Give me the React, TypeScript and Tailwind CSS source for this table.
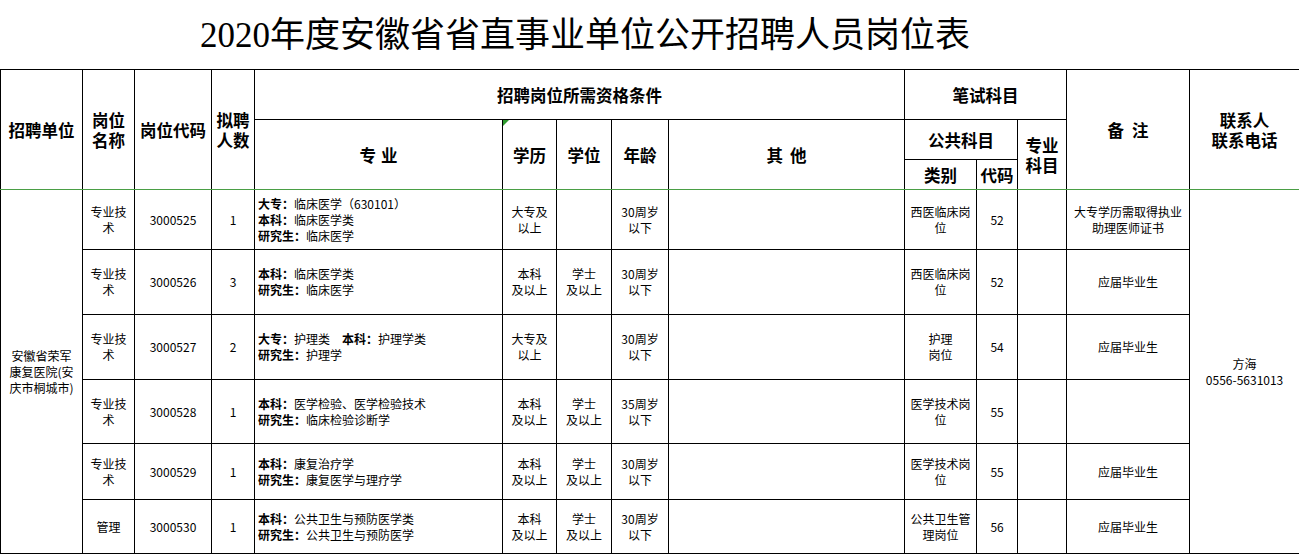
import React from 'react';

type Seg = [string, string];
type Row = {
  name: string[];
  code: string;
  n: string;
  major: Seg[][];
  edu: string[];
  deg: string[];
  age: string[];
  cat: string[];
  cc: string;
  note: string[];
  h: string;
};

const rows: Row[] = [
  {
    name: ['专业技', '术'],
    code: '3000525',
    n: '1',
    major: [[['大专：', '临床医学（630101）']], [['本科：', '临床医学类']], [['研究生：', '临床医学']]],
    edu: ['大专及', '以上'],
    deg: [],
    age: ['30周岁', '以下'],
    cat: ['西医临床岗', '位'],
    cc: '52',
    note: ['大专学历需取得执业', '助理医师证书'],
    h: 'h-[60px]',
  },
  {
    name: ['专业技', '术'],
    code: '3000526',
    n: '3',
    major: [[['本科：', '临床医学类']], [['研究生：', '临床医学']]],
    edu: ['本科', '及以上'],
    deg: ['学士', '及以上'],
    age: ['30周岁', '以下'],
    cat: ['西医临床岗', '位'],
    cc: '52',
    note: ['应届毕业生'],
    h: 'h-[65px]',
  },
  {
    name: ['专业技', '术'],
    code: '3000527',
    n: '2',
    major: [
      [
        ['大专：', '护理类　'],
        ['本科：', '护理学类'],
      ],
      [['研究生：', '护理学']],
    ],
    edu: ['大专及', '以上'],
    deg: [],
    age: ['30周岁', '以下'],
    cat: ['护理', '岗位'],
    cc: '54',
    note: ['应届毕业生'],
    h: 'h-[65px]',
  },
  {
    name: ['专业技', '术'],
    code: '3000528',
    n: '1',
    major: [[['本科：', '医学检验、医学检验技术']], [['研究生：', '临床检验诊断学']]],
    edu: ['本科', '及以上'],
    deg: ['学士', '及以上'],
    age: ['35周岁', '以下'],
    cat: ['医学技术岗', '位'],
    cc: '55',
    note: [],
    h: 'h-[64px]',
  },
  {
    name: ['专业技', '术'],
    code: '3000529',
    n: '1',
    major: [[['本科：', '康复治疗学']], [['研究生：', '康复医学与理疗学']]],
    edu: ['本科', '及以上'],
    deg: ['学士', '及以上'],
    age: ['30周岁', '以下'],
    cat: ['医学技术岗', '位'],
    cc: '55',
    note: ['应届毕业生'],
    h: 'h-[56px]',
  },
  {
    name: ['管理'],
    code: '3000530',
    n: '1',
    major: [[['本科：', '公共卫生与预防医学类']], [['研究生：', '公共卫生与预防医学']]],
    edu: ['本科', '及以上'],
    deg: ['学士', '及以上'],
    age: ['30周岁', '以下'],
    cat: ['公共卫生管', '理岗位'],
    cc: '56',
    note: ['应届毕业生'],
    h: 'h-[54px]',
  },
];

const th =
  'border border-black p-0 text-center align-middle font-bold text-[16.5px] leading-[20px]';
const GB = 'border-b-[#4a9e45]';
const td = 'border border-black p-0 text-center align-middle font-normal text-[12px] leading-[16px]';
const GT = 'border-t-[#4a9e45]';

function Lines({ lines }: { lines: string[] }) {
  return (
    <>
      {lines.map((l, i) => (
        <div key={i}>{l}</div>
      ))}
    </>
  );
}

export default function App() {
  return (
    <div className="w-[1299px] bg-white text-black font-['Noto_Sans_CJK_SC',sans-serif]">
      <div className="h-[69px] pl-[200px] pt-[18px]">
        <div className="text-[35px] leading-[36px] font-['Liberation_Serif','Noto_Sans_CJK_SC',serif] whitespace-nowrap">
          2020年度安徽省省直事业单位公开招聘人员岗位表
        </div>
      </div>
      <table className="w-[1299px] table-fixed border-collapse">
        <colgroup>
          <col className="w-[82px]" />
          <col className="w-[52px]" />
          <col className="w-[77px]" />
          <col className="w-[43px]" />
          <col className="w-[248px]" />
          <col className="w-[54px]" />
          <col className="w-[55px]" />
          <col className="w-[57px]" />
          <col className="w-[236px]" />
          <col className="w-[72px]" />
          <col className="w-[41px]" />
          <col className="w-[49px]" />
          <col className="w-[123px]" />
          <col className="w-[110px]" />
        </colgroup>
        <thead>
          <tr className="h-[50px]">
            <th rowSpan={3} className={`${th} ${GB}`}>
              招聘单位
            </th>
            <th rowSpan={3} className={`${th} ${GB}`}>
              <div>岗位</div>
              <div>名称</div>
            </th>
            <th rowSpan={3} className={`${th} ${GB}`}>
              岗位代码
            </th>
            <th rowSpan={3} className={`${th} ${GB}`}>
              <div>拟聘</div>
              <div>人数</div>
            </th>
            <th colSpan={5} className={th}>
              招聘岗位所需资格条件
            </th>
            <th colSpan={3} className={th}>
              笔试科目
            </th>
            <th rowSpan={3} className={`${th} ${GB}`}>
              备<span className="inline-block w-[8px]" />注
            </th>
            <th rowSpan={3} className={`${th} ${GB}`}>
              <div>联系人</div>
              <div>联系电话</div>
            </th>
          </tr>
          <tr className="h-[40px]">
            <th rowSpan={2} className={`${th} ${GB}`}>
              专<span className="inline-block w-[5px]" />业
            </th>
            <th rowSpan={2} className={`${th} ${GB} relative`}>
              <span className="absolute left-0 top-0 h-0 w-0 border-t-[6px] border-r-[6px] border-t-[#2e9a2e] border-r-transparent" />
              学历
            </th>
            <th rowSpan={2} className={`${th} ${GB}`}>
              学位
            </th>
            <th rowSpan={2} className={`${th} ${GB}`}>
              年龄
            </th>
            <th rowSpan={2} className={`${th} ${GB}`}>
              其<span className="inline-block w-[7px]" />他
            </th>
            <th colSpan={2} className={th}>
              公共科目
            </th>
            <th rowSpan={2} className={`${th} ${GB}`}>
              <div>专业</div>
              <div>科目</div>
            </th>
          </tr>
          <tr className="h-[30px]">
            <th className={`${th} ${GB}`}>类别</th>
            <th className={`${th} ${GB}`}>代码</th>
          </tr>
        </thead>
        <tbody>
          {rows.map((r, i) => {
            const t = i === 0 ? GT : '';
            return (
              <tr key={r.code} className={r.h}>
                {i === 0 && (
                  <td rowSpan={6} className={`${td} ${GT} px-[3px]`}>
                    <Lines lines={['安徽省荣军', '康复医院(安', '庆市桐城市)']} />
                  </td>
                )}
                <td className={`${td} ${t}`}>
                  <Lines lines={r.name} />
                </td>
                <td className={`${td} ${t}`}>{r.code}</td>
                <td className={`${td} ${t}`}>{r.n}</td>
                <td className={`${td} ${t} text-left pl-[3px]`}>
                  {r.major.map((line, j) => (
                    <div key={j} className="whitespace-nowrap">
                      {line.map(([b, n], k) => (
                        <React.Fragment key={k}>
                          <span className="font-bold">{b}</span>
                          <span>{n}</span>
                        </React.Fragment>
                      ))}
                    </div>
                  ))}
                </td>
                <td className={`${td} ${t}`}>
                  <Lines lines={r.edu} />
                </td>
                <td className={`${td} ${t}`}>
                  <Lines lines={r.deg} />
                </td>
                <td className={`${td} ${t}`}>
                  <Lines lines={r.age} />
                </td>
                <td className={`${td} ${t}`} />
                <td className={`${td} ${t}`}>
                  <Lines lines={r.cat} />
                </td>
                <td className={`${td} ${t}`}>{r.cc}</td>
                <td className={`${td} ${t}`} />
                <td className={`${td} ${t}`}>
                  <Lines lines={r.note} />
                </td>
                {i === 0 && (
                  <td rowSpan={6} className={`${td} ${GT}`}>
                    <div>方海</div>
                    <div>0556-5631013</div>
                  </td>
                )}
              </tr>
            );
          })}
          <tr className="h-[24px]">
            {Array.from({ length: 14 }).map((_, i) => (
              <td key={i} className={td} />
            ))}
          </tr>
        </tbody>
      </table>
    </div>
  );
}
